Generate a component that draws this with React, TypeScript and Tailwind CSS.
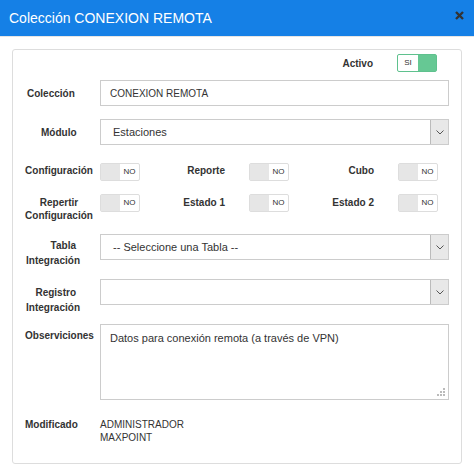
import React from 'react';

const Toggle: React.FC<{ on?: boolean; className?: string }> = ({ on, className = '' }) => (
  <div
    className={`flex h-[18px] w-[40px] shrink-0 rounded-[2px] border bg-white ${on ? 'border-[#5fc18e]' : 'border-[#dddddd]'} ${className}`}
  >
    {on ? (
      <>
        <div className="flex flex-1 items-center justify-center text-[8px] text-[#333]">SI</div>
        <div className="w-[18px] bg-[#66c894]" />
      </>
    ) : (
      <>
        <div className="w-[19px] bg-[#e6e6e6]" />
        <div className="flex flex-1 items-center justify-center text-[8px] text-[#333]">NO</div>
      </>
    )}
  </div>
);

const Select: React.FC<{ value?: string }> = ({ value }) => (
  <div className="flex h-[26px] flex-1 border border-[#cccccc] bg-white">
    <div className="flex flex-1 items-center pl-[12px] text-[11px] text-[#333]">{value}</div>
    <div className="flex w-[18px] items-center justify-center border-l border-[#bbbbbb] bg-[#e8e8e8]">
      <svg width="8" height="5" viewBox="0 0 8 5">
        <path d="M0.5 0.5 L4 4 L7.5 0.5" fill="none" stroke="#555" strokeWidth="1" />
      </svg>
    </div>
  </div>
);

export default function App() {
  return (
    <div className="h-[468px] w-[474px] bg-white font-['Liberation_Sans',Arial,sans-serif] text-[#333]">
      <div className="flex h-[37px] items-center justify-between border-b border-[#e5e5e5] bg-[#1580e6] pl-[9px] pr-[10px]">
        <span className="text-[14px] text-white">Colección CONEXION REMOTA</span>
        <svg width="9" height="9" viewBox="0 0 9 9" className="mb-[5px]">
          <path d="M1 1 L8 8 M8 1 L1 8" stroke="#333" strokeWidth="2.4" />
        </svg>
      </div>

      <div className="px-[12px] pt-[12px]">
        <div className="rounded-[3px] border border-[#dddddd] pb-[19px] pl-[12px] pr-[12px] pt-[4px] text-[10px]">
          {/* Activo */}
          <div className="flex h-[18px] items-center justify-end">
            <span className="font-bold">Activo</span>
            <Toggle on className="ml-[24px] mr-[12px]" />
          </div>

          {/* Colección */}
          <div className="mt-[8px] flex h-[26px]">
            <label className="flex w-[75px] items-center font-bold pl-[2px]">Colección</label>
            <div className="flex flex-1 items-center border border-[#cccccc] pl-[9px] text-[10px]">CONEXION REMOTA</div>
          </div>

          {/* Módulo */}
          <div className="mt-[13px] flex h-[26px]">
            <label className="flex w-[75px] items-center font-bold pl-[16px]">Módulo</label>
            <Select value="Estaciones" />
          </div>

          {/* Toggles fila 1 */}
          <div className="mt-[18px] flex items-start">
            <span className="mt-[1px] w-[68px] text-center font-bold leading-[13px]">Configuración</span>
            <Toggle className="ml-[7px]" />
            <span className="mt-[1px] w-[85px] text-right font-bold leading-[13px]">Reporte</span>
            <Toggle className="ml-[24px]" />
            <span className="mt-[1px] w-[85px] text-right font-bold leading-[13px]">Cubo</span>
            <Toggle className="ml-[24px]" />
          </div>

          {/* Toggles fila 2 */}
          <div className="mt-[13px] flex items-start">
            <span className="mt-[2px] w-[68px] text-center font-bold leading-[13px]">
              Repertir
              <br />
              Configuración
            </span>
            <Toggle className="ml-[7px]" />
            <span className="mt-[2px] w-[85px] text-right font-bold leading-[13px]">Estado 1</span>
            <Toggle className="ml-[24px]" />
            <span className="mt-[2px] w-[85px] text-right font-bold leading-[13px]">Estado 2</span>
            <Toggle className="ml-[24px]" />
          </div>

          {/* Tabla Integración */}
          <div className="mt-[12px] flex items-start">
            <label className="w-[75px] pr-[20px] pt-[4px] text-right font-bold leading-[15px]">
              <span className="block pr-[4px]">Tabla</span>
              <span className="block">Integración</span>
            </label>
            <Select value="-- Seleccione una Tabla --" />
          </div>

          {/* Registro Integración */}
          <div className="mt-[11px] flex items-start">
            <label className="w-[75px] pr-[20px] pt-[6px] text-right font-bold leading-[15px]">
              <span className="block pr-[4px]">Registro</span>
              <span className="block">Integración</span>
            </label>
            <Select value="" />
          </div>

          {/* Observaciones */}
          <div className="mt-[9px] flex items-start">
            <label className="w-[75px] pt-[5px] font-bold leading-[14px]">Observiciones</label>
            <div className="relative h-[76px] flex-1 border border-[#cccccc]">
              <textarea
                readOnly
                defaultValue="Datos para conexión remota (a través de VPN)"
                className="h-full w-full resize-none pl-[9px] pt-[6px] text-[11px] leading-[14px] text-[#333] outline-none"
              />
              <svg width="8" height="8" viewBox="0 0 8 8" className="absolute bottom-[3px] right-[3px]">
                <rect x="6" y="0" width="2" height="2" fill="#bbb" />
                <rect x="3" y="3" width="2" height="2" fill="#bbb" />
                <rect x="6" y="3" width="2" height="2" fill="#bbb" />
                <rect x="0" y="6" width="2" height="2" fill="#bbb" />
                <rect x="3" y="6" width="2" height="2" fill="#bbb" />
                <rect x="6" y="6" width="2" height="2" fill="#bbb" />
              </svg>
            </div>
          </div>

          {/* Modificado */}
          <div className="mt-[18px] flex items-start leading-[13px]">
            <label className="w-[75px] font-bold">Modificado</label>
            <div className="text-[10px]">
              <div>ADMINISTRADOR</div>
              <div>MAXPOINT</div>
            </div>
          </div>
        </div>
      </div>
    </div>
  );
}
